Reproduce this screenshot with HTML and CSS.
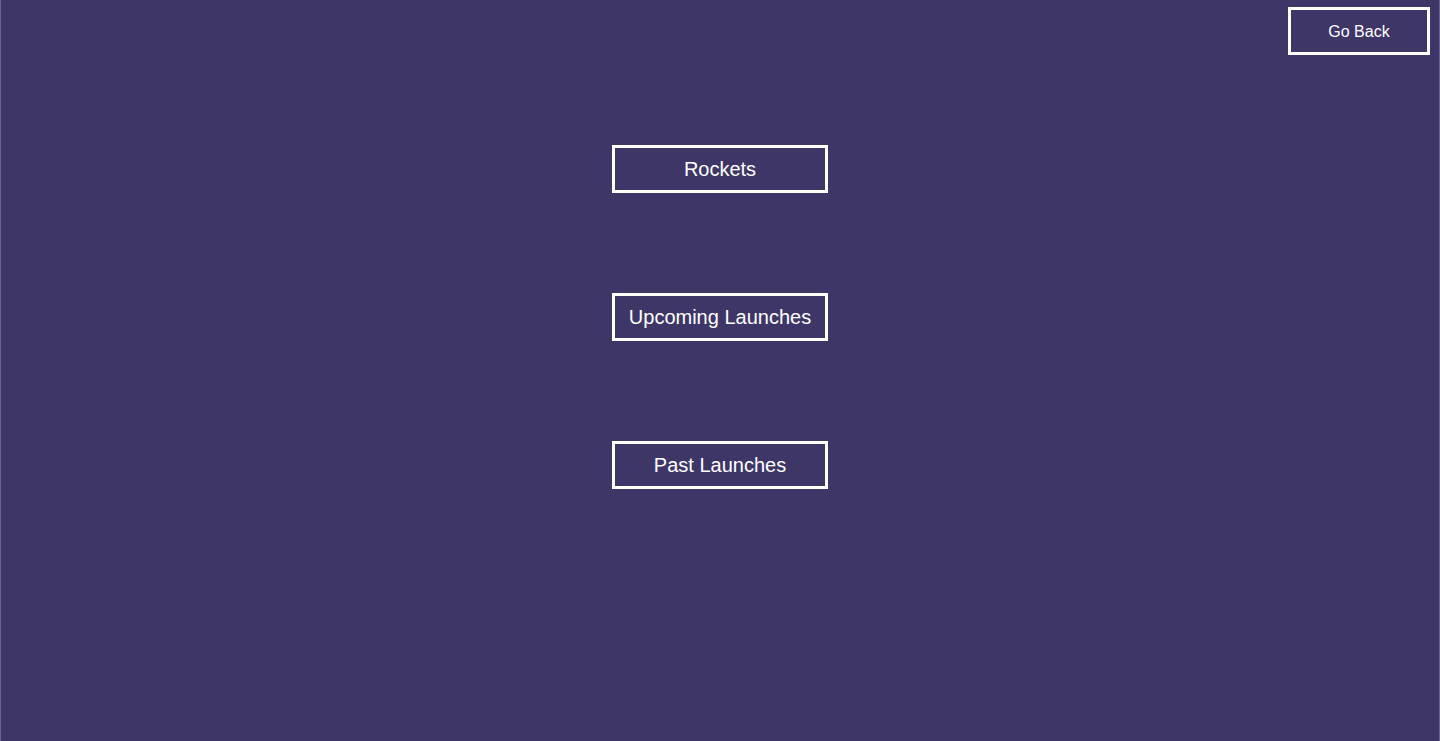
FILE: index.html
```html
<!DOCTYPE html>
<html lang="en">
<head>
<meta charset="utf-8">
<title>SpaceX</title>
<link rel="stylesheet" href="styles.css">
</head>
<body>
<div class="page">
  <header class="topbar">
    <button class="btn btn-back">Go Back</button>
  </header>
  <nav class="menu">
    <button class="btn btn-menu">Rockets</button>
    <button class="btn btn-menu">Upcoming Launches</button>
    <button class="btn btn-menu">Past Launches</button>
  </nav>
</div>
</body>
</html>
```
FILE: styles.css
```css
html, body {
  margin: 0;
  padding: 0;
  height: 100%;
}
body {
  background: #3e3667;
  font-family: "Liberation Sans", Arial, Helvetica, sans-serif;
}
.page {
  box-sizing: border-box;
  height: 741px;
  border-left: 1px solid #6a6390;
  border-right: 1px solid #6a6390;
  display: flex;
  flex-direction: column;
}
.topbar {
  display: flex;
  justify-content: flex-end;
  padding: 7px 9px 0 0;
}
.btn {
  box-sizing: border-box;
  background: transparent;
  border: 3px solid #ffffff;
  color: #ffffff;
  font-family: "Liberation Sans", Arial, Helvetica, sans-serif;
  height: 48px;
  padding: 0;
  cursor: pointer;
}
.btn-back {
  width: 142px;
  font-size: 16px;
  padding-top: 2px;
}
.menu {
  display: flex;
  flex-direction: column;
  align-items: center;
  gap: 100px;
  margin-top: 90px;
}
.btn-menu {
  width: 216px;
  font-size: 20px;
}
```
